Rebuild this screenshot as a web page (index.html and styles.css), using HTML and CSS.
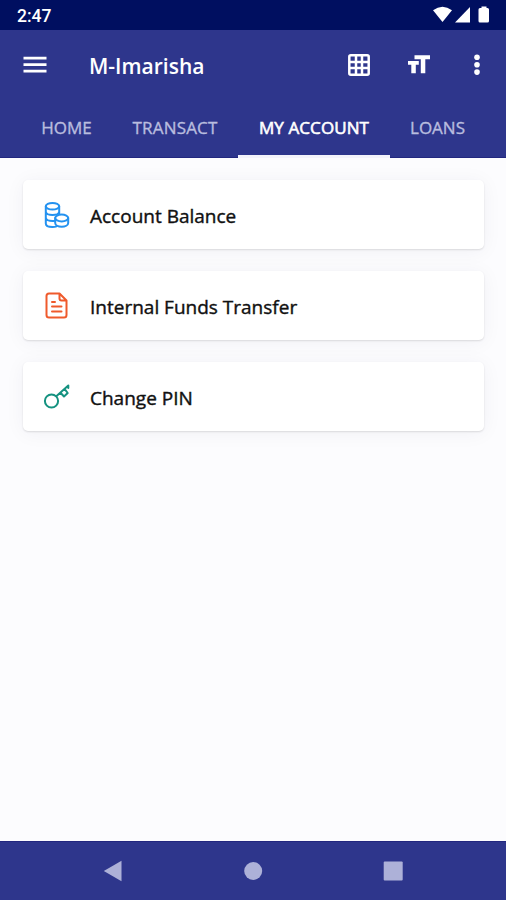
FILE: index.html
```html
<!DOCTYPE html>
<html lang="en">
<head>
  <meta charset="UTF-8" />
  <meta name="viewport" content="width=device-width, initial-scale=1.0" />
  <title>M-Imarisha</title>
  <link rel="stylesheet" href="styles.css">
</head>
<body>
  <div class="status-bar">
    <span class="clock">2:47</span>
    <svg width="58" height="20" viewBox="0 0 58 20" fill="#fff">
      <path d="M0 5.200Q9.500-1.800 19 5.200L9.500 17z"/>
      <path d="M37 2v15.500H22z"/>
      <path d="M48.500 1.500h5V3h1q1.500 0 1.500 1.500V16q0 1.500-1.500 1.500h-7.500q-1.500 0-1.500-1.500V4.500Q45.500 3 47 3h1.500z"/>
    </svg>
  </div>
  <header class="app-bar">
    <button class="icon-btn menu" aria-label="Menu">
      <svg width="24" height="18" viewBox="0 0 24 18" fill="#fff"><path d="M.5 .8h23v2.700H.5zM.5 7.300h23V10H.5zM.5 13.800h23v2.700H.5z"/></svg>
    </button>
    <h1>M-Imarisha</h1>
    <div class="actions">
      <button class="icon-btn" aria-label="Grid">
        <svg width="22" height="22" viewBox="0 0 22 22" fill="none" stroke="#fff" stroke-width="2.500"><rect x="1.300" y="1.300" width="19.400" height="19.400" rx="1.500"/><path d="M8 1v20M14 1v20M1 8h20M1 14h20"/></svg>
      </button>
      <button class="icon-btn" aria-label="Text size">
        <svg width="22" height="21" viewBox="0 0 22 21" fill="#fff"><path d="M6.500.2H22v4h-4.700V18.200h-4.500V4.200H6.500zM0 6h10.800v3.700H7.800v8.500H3.300V9.700H0z"/></svg>
      </button>
      <button class="icon-btn" aria-label="More">
        <svg width="6" height="22" viewBox="0 0 6 22" fill="#fff"><circle cx="3" cy="3.300" r="2.800"/><circle cx="3" cy="10.700" r="2.800"/><circle cx="3" cy="18.100" r="2.800"/></svg>
      </button>
    </div>
  </header>
  <nav class="tabs">
    <a class="tab home">HOME</a>
    <a class="tab transact">TRANSACT</a>
    <a class="tab account active">MY ACCOUNT</a>
    <a class="tab loans">LOANS</a>
  </nav>
  <main class="list">
    <div class="card">
      <svg class="coins" width="28" height="28" viewBox="0 0 28 28">
        <ellipse cx="9.500" cy="5.300" rx="6.700" ry="3.300"/>
        <path d="M2.800 5.300V22.500c0 2 2.800 3.500 6.700 3.500 1.500 0 2.900-.2 4-.7M16.200 5.300v7.500M2.800 10.500c0 2 2.900 3.500 6.700 3.500s6.700-1.500 6.700-3.500M2.800 16.500c0 2 2.900 3.500 6.700 3.500.9 0 1.700-.1 2.500-.3"/>
        <ellipse cx="18.700" cy="17" rx="6.500" ry="3.400"/>
        <path d="M12.200 17v5c0 2.100 2.900 3.700 6.500 3.700s6.500-1.600 6.500-3.700v-5"/>
      </svg>
      <span>Account Balance</span>
    </div>
    <div class="card">
      <svg class="doc" width="28" height="28" viewBox="0 0 28 28">
        <path d="M16.500 1.500H6Q3.500 1.500 3.500 4v19Q3.500 25.500 6 25.500h15q2.500 0 2.500-2.500V8.500zM16.500 1.500V6.500q0 2 2 2h5M9 10h3M9 14.500h9.500M9 19.500h9.500"/>
      </svg>
      <span>Internal Funds Transfer</span>
    </div>
    <div class="card">
      <svg class="key" width="28" height="28" viewBox="0 0 28 28">
        <circle cx="8.500" cy="18" r="6.600"/>
        <path d="M13.300 13.200L25.300 2.500V5M17.500 9.700l3.500 3.800 3.700-3.500-3-3.800"/>
      </svg>
      <span>Change PIN</span>
    </div>
  </main>
  <footer class="nav-bar">
    <svg width="20" height="22" viewBox="0 0 20 22"><path d="M.8 11L18.500 .8v20.400z"/></svg>
    <svg width="20" height="22" viewBox="0 0 20 22"><circle cx="10.200" cy="11" r="9"/></svg>
    <svg width="20" height="22" viewBox="0 0 20 22"><rect x=".7" y="1.500" width="19" height="19" rx="1"/></svg>
  </footer>
</body>
</html>
```
FILE: styles.css
```css
* { box-sizing: border-box; }
html, body { margin: 0; padding: 0; height: 100%; }
body { display: flex; flex-direction: column; background: #fcfcfe; color: #111; font-family: "Open Sans", "Noto Sans", sans-serif; }
svg { display: block; flex: none; }

.status-bar { height: 30px; flex: none; display: flex; align-items: center; justify-content: space-between; padding: 0 15px 0 17px; background: #000f60; color: #fff; }
.clock { font: 500 17.5px/30px Roboto, sans-serif; padding-top: 2px; }

.app-bar { height: 70px; flex: none; display: flex; align-items: center; padding: 0 26px 0 23px; background: #2e368c; }
.app-bar h1 { margin: 1px 0 0 42px; color: #fff; font-size: 21px; font-weight: 600; line-height: 28px; }
.icon-btn { padding: 0; border: none; background: none; }
.actions { margin-left: auto; display: flex; align-items: center; gap: 38px; }
.actions .icon-btn:last-child { margin-left: 6px; }

.tabs { height: 58px; flex: none; display: flex; padding-left: 21px; background: #2e368c; border-bottom: 1px solid #22277f; }
.tab { height: 58px; display: flex; align-items: center; justify-content: center; color: #b9bddf; font-size: 17px; white-space: nowrap; padding-bottom: 3px; -webkit-text-stroke: 0.35px currentColor; }
.home { width: 91px; }
.transact { width: 126px; letter-spacing: 0.2px; }
.account { width: 152px; letter-spacing: 0.1px; }
.loans { width: 95px; }
.tab.active { color: #fff; border-bottom: 3px solid #f3f3fb; padding: 3px 0; -webkit-text-stroke-width: 0.6px; }

.list { flex: 1; display: flex; flex-direction: column; gap: 22px; padding: 22px 22px 0 23px; }
.card { height: 69px; display: flex; align-items: center; gap: 19px; padding: 0 20px; background: #fff; border-radius: 5px; font-size: 19px; -webkit-text-stroke: 0.4px currentColor; box-shadow: 0 1px 2px rgba(0,0,0,0.12), 0 2px 20px rgba(40,40,80,0.05); }
.card span { padding-top: 3px; }
.card svg { fill: none; stroke-width: 2; stroke-linecap: round; stroke-linejoin: round; }
.coins { stroke: #2492f0; }
.doc { stroke: #ef5a2c; }
.key { stroke: #159280; }

.nav-bar { height: 59px; flex: none; display: flex; justify-content: space-between; align-items: center; padding: 0 103px; background: #2e368c; border-top: 1px solid #22277f; }
.nav-bar svg { fill: #adb1d8; }
```
